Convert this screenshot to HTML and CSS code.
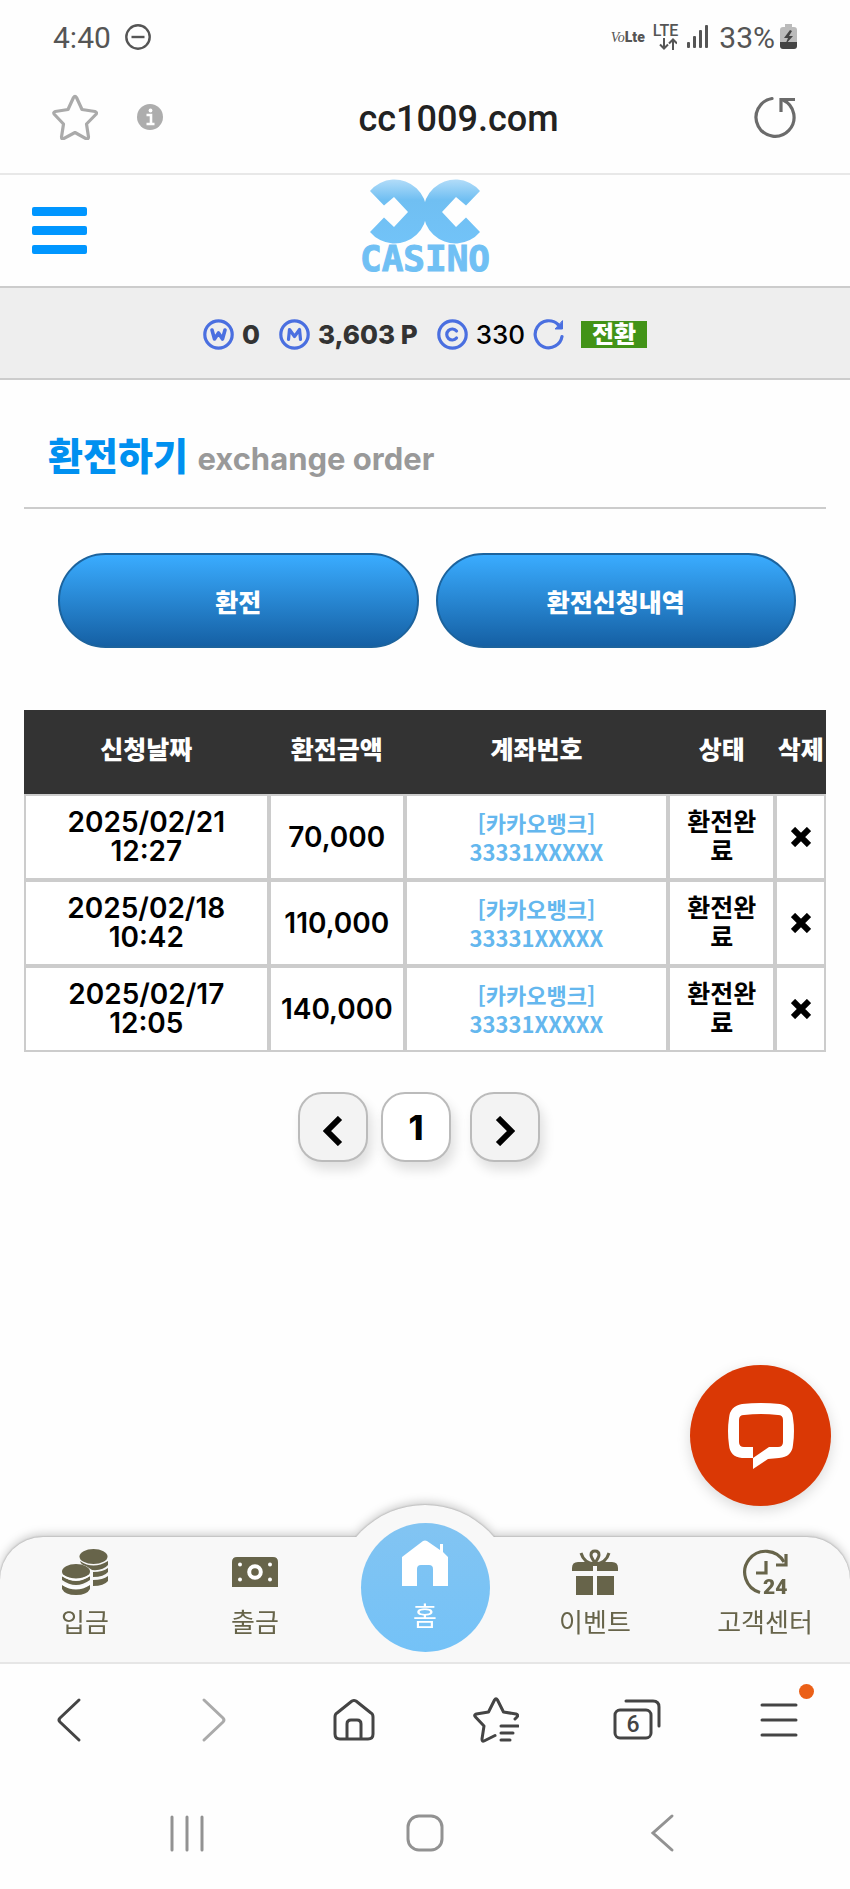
FILE: index.html
```html
<!DOCTYPE html>
<html lang="ko">

<head>
    <meta charset="utf-8">
    <meta name="viewport" content="width=device-width, initial-scale=1.0">
    <title>환전하기</title>
    <link rel="stylesheet" href="styles.css">
</head>

<body>
    <div class="status">
        <span>4:40</span>
        <svg class="dnd" width="26" height="26" viewBox="0 0 26 26" fill="none" stroke="#555" stroke-width="2.4"><circle cx="13" cy="13" r="11.7"/><path d="M6.5 13h13"/></svg>
        <span class="volte"><i>Vo</i><b>Lte</b></span>
        <span class="lte">LTE
            <svg width="18" height="12" viewBox="0 0 18 12" fill="none" stroke="#555" stroke-width="2"><path d="M5 0v10M1 6.500l4 4 4-4M14 12V2M10 5.500l4-4 4 4"/></svg>
        </span>
        <svg class="signal" width="22" height="24" viewBox="0 0 22 24" fill="#555"><rect x="0" y="17" width="3" height="6" rx="1"/><rect x="6" y="11" width="3" height="12" rx="1"/><rect x="12" y="5" width="3" height="18" rx="1"/><rect x="18" y="0" width="3" height="23" rx="1"/></svg>
        <span>33%</span>
        <svg width="17" height="26" viewBox="0 0 17 26"><path d="M5 0h7v3h2q3 0 3 3v12H0V6q0-3 3-3h2z" fill="#bbb"/><path d="M0 18h17v4q0 3-3 3H3q-3 0-3-3z" fill="#444"/><path d="M10 6l-6 8h4l-3 7 8-9H9l3-5z" fill="#444"/></svg>
    </div>

    <div class="address">
        <button aria-label="북마크">
            <svg width="46" height="46" viewBox="0 0 46 46" fill="none" stroke="#aaa" stroke-width="3.200" stroke-linejoin="round"><path d="M21.500 3.500q1.500-2.500 3 0l5.500 12 13 2q2.500.8.8 3l-9.300 9.500 2 13q0 2.500-2.500 1.700L23 38.500l-11.500 6.200q-2 .8-2-1.700l2-13-9-9.500q-1.800-2.200.8-3l12.700-2z"/></svg>
        </button>
        <button aria-label="사이트 정보">
            <svg width="26" height="26" viewBox="0 0 26 26"><circle cx="13" cy="13" r="13" fill="#adadad"/><path d="M9.500 11h4.500v8.500M9.500 20h8" fill="none" stroke="#fff" stroke-width="2.600"/><circle cx="13.500" cy="6.500" r="1.900" fill="#fff"/></svg>
        </button>
        <span class="domain">cc1009.com</span>
        <button aria-label="새로고침">
            <svg width="42" height="42" viewBox="0 0 42 42" fill="none" stroke="#6b6b6b" stroke-width="3.200"><path d="M18 2.500A19 19 0 1 0 29 4" stroke-linecap="round"/><path d="M27 16V3.500h14"/></svg>
        </button>
    </div>

    <header class="header">
        <button class="menu" aria-label="메뉴"><span></span><span></span><span></span></button>
        <a href="#" class="logo">
            <svg width="112" height="65" viewBox="0 0 112 65">
                <defs>
                    <linearGradient id="sky" gradientUnits="userSpaceOnUse" x1="0" y1="0" x2="0" y2="65"><stop offset="0" stop-color="#b4ddf9"/><stop offset=".32" stop-color="#70bff2"/><stop offset="1" stop-color="#72c3f8"/></linearGradient>
                </defs>
                <path fill="url(#sky)" d="M1 12A32 32 0 1 1 1 53L15 38.500 25 48 39 33 25 18 15 26.500Z"/>
                <path fill="url(#sky)" d="M111 12A32 32 0 1 0 111 53L97 38.500 87 48 73 33 87 18 97 26.500Z"/>
            </svg>
            <span>CASINO</span>
        </a>
    </header>

    <div class="wallet">
        <svg width="31" height="31" viewBox="0 0 31 31" fill="none" stroke="#4a6fe0" stroke-width="3.200" stroke-linecap="round" stroke-linejoin="round"><circle cx="15.500" cy="15.500" r="13.700"/><path d="M9 11l2.500 9 4-6 4 6L22 11" stroke-width="3.600"/></svg>
        <strong>0</strong>
        <svg class="coin" width="31" height="31" viewBox="0 0 31 31" fill="none" stroke="#4a6fe0" stroke-width="3.200" stroke-linecap="round" stroke-linejoin="round"><circle cx="15.500" cy="15.500" r="13.700"/><path d="M9.500 20.500l1-10 5 7 5-7 1 10"/></svg>
        <strong>3,603 P</strong>
        <svg class="coin" width="31" height="31" viewBox="0 0 31 31" fill="none" stroke="#4a6fe0" stroke-width="3.200" stroke-linecap="round"><circle cx="15.500" cy="15.500" r="13.700"/><path d="M19.500 12a5.500 5.500 0 1 0 0 7"/></svg>
        <span>330</span>
        <button aria-label="갱신">
            <svg width="32" height="31" viewBox="0 0 32 31" fill="none" stroke="#4a6fe0" stroke-width="3.200" stroke-linecap="round"><path d="M29 17.500A13.500 13.500 0 1 1 25 5.500"/><path d="M29.500 2v8h-7z" fill="#4a6fe0" stroke-width="1"/></svg>
        </button>
        <button class="convert">전환</button>
    </div>

    <main>
        <h1>환전하기 <small>exchange order</small></h1>

        <div class="knapper">
            <button>환전</button>
            <button>환전신청내역</button>
        </div>

        <table>
            <colgroup>
                <col class="col-date"><col class="col-amount"><col class="col-account"><col class="col-state"><col>
            </colgroup>
            <thead>
                <tr>
                    <th>신청날짜</th>
                    <th>환전금액</th>
                    <th>계좌번호</th>
                    <th>상태</th>
                    <th>삭제</th>
                </tr>
            </thead>
            <tbody id="liste"></tbody>
        </table>

        <template>
            <tr>
                <td class="dato"></td>
                <td class="belob"></td>
                <td class="konto">[카카오뱅크]<br>33331XXXXX</td>
                <td class="state">환전완료</td>
                <td><button aria-label="삭제"><svg width="20" height="20" viewBox="0 0 20 20" stroke="#000" stroke-width="6"><path d="M2 2l16 16M18 2L2 18"/></svg></button></td>
            </tr>
        </template>

        <nav class="pages">
            <button aria-label="이전"><svg width="20" height="30" viewBox="0 0 20 30" fill="none" stroke="#000" stroke-width="6"><path d="M17 2L4 15l13 13"/></svg></button>
            <button class="valgt">1</button>
            <button aria-label="다음"><svg width="20" height="30" viewBox="0 0 20 30" fill="none" stroke="#000" stroke-width="6"><path d="M3 2l13 13L3 28"/></svg></button>
        </nav>
    </main>

    <button class="chat" aria-label="채팅">
        <svg width="68" height="68" viewBox="0 0 68 68"><path fill="#fff" fill-rule="evenodd" d="M15 2Q34 0 53 2 65 4 66 16 68 29 66 43 65 55 52 56L41 57 26 67V56H15Q3 55 2 43 0 29 2 16 3 4 15 2ZM17 13Q12 13 12 18V40Q12 45 17 45H26V56L42 45H51Q56 45 56 40V18Q56 13 51 13 34 11 17 13Z"/></svg>
    </button>

    <nav class="tabs">
        <a href="#">
            <svg width="46" height="46" viewBox="0 0 46 46" fill="#67644a">
                <ellipse cx="31.500" cy="7.500" rx="14" ry="7.500"/>
                <path d="M18 12q13 9 28 0v4q-5 6-16 5l-6-4q-5-1-6-5zM31 23q10 0 15-4v4q-4 5-15 5zM31 31q10 0 15-4v5q-4 5-15 5z"/>
                <ellipse cx="14" cy="22.500" rx="14" ry="7.500"/>
                <path d="M0 27q14 10 28 0v4q-14 10-28 0zM0 36q14 9 28 0v4q-3 6-14 6T0 40z"/>
                <path d="M0 26q14 9 28 0M0 34.500q14 9 28 0" fill="none" stroke="#fff" stroke-width="2"/>
            </svg>
            입금
        </a>
        <a href="#">
            <svg width="46" height="46" viewBox="0 0 46 46"><path d="M0 38V13q0-5 5-5h36q5 0 5 5v25z" fill="#67644a"/><circle cx="23" cy="23" r="5.800" fill="none" stroke="#fff" stroke-width="4"/><g fill="#fff"><circle cx="8" cy="15.500" r="2"/><circle cx="38" cy="15.500" r="2"/><circle cx="8" cy="30.500" r="2"/><circle cx="38" cy="30.500" r="2"/></g></svg>
            출금
        </a>
        <a href="#" class="home">
            <svg width="46" height="46" viewBox="0 0 46 46" fill="#fff"><path d="M0 17L21 1q2-1 4 0l13 9V4h3v8l5 5v29H31V29q0-4-4-4h-8q-4 0-4 4v17H0z"/></svg>
            홈
        </a>
        <a href="#">
            <svg width="46" height="46" viewBox="0 0 46 46" fill="#67644a"><path d="M0 22v-3q0-6 6-6h34q6 0 6 6v3H25v-5h-4v5zM4 27h17v19H4zM25 27h17v19H25z"/><path d="M9 4q3 10 13 11M37 4q-3 10-13 11M23 14q-4-6-4-8 0-4 4-4t4 4q0 2-4 8z" fill="none" stroke="#67644a" stroke-width="3"/></svg>
            이벤트
        </a>
        <a href="#">
            <svg width="46" height="46" viewBox="0 0 46 46" fill="none" stroke="#67644a" stroke-width="3.200"><path d="M18 43.500A21 21 0 1 1 42 13"/><path d="M44 5v11H34M24 12v12H14" /><text x="21" y="45" fill="#67644a" stroke="none" class="h24">24</text></svg>
            고객센터
        </a>
    </nav>

    <nav class="browser">
        <button aria-label="뒤로"><svg width="46" height="46" viewBox="0 0 46 46"><path d="M31 3L12 21q-2 2 0 4l19 18"/></svg></button>
        <button aria-label="앞으로" class="off"><svg width="46" height="46" viewBox="0 0 46 46"><path d="M15 3l19 18q2 2 0 4L15 43"/></svg></button>
        <button aria-label="홈"><svg width="46" height="46" viewBox="0 0 46 46"><path d="M4 20q0-3 2-4L21 4q2-1 4 0l15 12q2 1 2 4v17q0 5-5 5H9q-5 0-5-5zM16 42V27q0-4 4-4h6q4 0 4 4v15"/></svg></button>
        <button aria-label="북마크 목록"><svg width="46" height="46" viewBox="0 0 46 46"><path d="M22 38.500L11 44q-2 1-2-2l2-13-8.500-9q-2-2 .8-3l12.200-2 6-12q1.500-2.500 3 0l6 12 12.500 2q3 1 1 3l-2 2M28 29h17M28 36h12M28 43h9"/></svg></button>
        <button aria-label="탭 6개"><svg width="48" height="46" viewBox="0 0 48 46"><rect x="2" y="13" width="36" height="28" rx="5"/><path d="M13 4h27q6 0 6 6v19"/><text x="20" y="35" text-anchor="middle">6</text></svg></button>
        <button aria-label="더보기" class="more"><svg width="46" height="46" viewBox="0 0 46 46"><path d="M6 8h34M6 23h34M6 38h34"/></svg></button>
    </nav>

    <nav class="system">
        <button aria-label="최근 앱"><svg width="40" height="40" viewBox="0 0 40 40"><path d="M5 4v33M20 4v33M35 4v33"/></svg></button>
        <button aria-label="홈 화면"><svg width="40" height="40" viewBox="0 0 40 40"><rect x="3" y="3" width="34" height="34" rx="11"/></svg></button>
        <button aria-label="뒤로가기"><svg width="40" height="40" viewBox="0 0 40 40"><path d="M29 3L10 20l19 17"/></svg></button>
    </nav>

    <script>
        const orders = [
            { dato: "2025/02/21 12:27", belob: "70,000" },
            { dato: "2025/02/18 10:42", belob: "110,000" },
            { dato: "2025/02/17 12:05", belob: "140,000" }
        ];
        const dest = document.querySelector("#liste");
        const skabelon = document.querySelector("template").content;

        orders.forEach(order => {
            const klon = skabelon.cloneNode(true);
            klon.querySelector(".dato").textContent = order.dato;
            klon.querySelector(".belob").textContent = order.belob;
            dest.appendChild(klon);
        });
    </script>
</body>

</html>
```
FILE: styles.css
```css
* {
    box-sizing: border-box;
}

body {
    margin: 0;
    min-height: 100vh;
    display: flex;
    flex-direction: column;
    background-color: #fefefe;
    font-family: Inter, "Noto Sans CJK KR", sans-serif;
    color: #000;
}

button {
    padding: 0;
    border: 0;
    background: none;
    color: inherit;
    font: inherit;
    cursor: pointer;
}

svg {
    display: block;
    flex: none;
}

a {
    color: inherit;
    text-decoration: none;
}

/* status + address */
.status {
    display: flex;
    align-items: center;
    height: 74px;
    padding: 0 53px;
    font-family: Roboto, sans-serif;
    font-size: 30px;
    color: #555;
}

.dnd {
    margin-left: 14px;
    margin-right: auto;
}

.volte {
    display: flex;
    align-items: baseline;
    font-size: 14px;
}

.volte i {
    font-family: "Liberation Serif", serif;
}

.volte b {
    font-weight: 900;
}

.lte {
    display: flex;
    flex-direction: column;
    align-items: center;
    margin: 0 9px 0 8px;
    font-size: 16px;
    font-weight: 500;
    line-height: 14px;
}

.signal {
    margin-right: 10px;
}

.status svg:last-child {
    margin-left: 5px;
}

.address {
    display: grid;
    grid-template-columns: 46px 26px 1fr 42px;
    align-items: center;
    column-gap: 39px;
    height: 101px;
    padding: 0 54px 14px 52px;
    border-bottom: 2px solid #e8e8e8;
}

.domain {
    padding-top: 4px;
    text-align: center;
    font-family: Roboto, sans-serif;
    font-size: 36px;
    font-weight: 500;
    color: #222;
}

/* header */
.header {
    display: grid;
    grid-template-columns: 1fr auto 1fr;
    align-items: center;
    height: 113px;
    padding: 0 32px;
    border-bottom: 2px solid #ccc;
}

.menu {
    display: grid;
    gap: 10px;
    width: 55px;
}

.menu span {
    height: 9px;
    border-radius: 2px;
    background-color: #0096ff;
}

.logo {
    display: flex;
    flex-direction: column;
    align-items: center;
    padding-bottom: 8px;
}

.logo span {
    font-family: "DejaVu Sans Mono", monospace;
    font-size: 36px;
    font-weight: bold;
    line-height: 30px;
    color: #70c0f4;
    -webkit-text-stroke: 1px #70c0f4;
}

.wallet {
    display: flex;
    align-items: center;
    justify-content: center;
    gap: 8px;
    height: 92px;
    padding-top: 3px;
    border-bottom: 2px solid #ccc;
    background-color: #eee;
    font-size: 26px;
    font-weight: 500;
}

.wallet strong {
    font-weight: 800;
    color: #333;
}

.coin {
    margin-left: 11px;
}

.convert {
    width: 66px;
    height: 27px;
    margin-left: 8px;
    background-color: #429317;
    color: white;
    font-size: 24px;
    font-weight: 900;
    line-height: 24px;
}

/* main */
main {
    flex: 1;
    padding: 48px 24px 0;
}

h1 {
    margin: 0 0 44px;
    padding: 0 24px 23px;
    border-bottom: 2px solid #ccc;
    font-size: 38px;
    font-weight: 900;
    line-height: 56px;
    color: #0090f0;
}

h1 small {
    margin-left: 2px;
    font-size: 31px;
    font-weight: 700;
    line-height: 40px;
    color: #999;
}

.knapper {
    display: grid;
    grid-template-columns: 1fr 1fr;
    gap: 17px;
    margin-bottom: 62px;
    padding: 0 30px 0 34px;
}

.knapper button {
    height: 95px;
    border: 2px solid #1c639d;
    border-radius: 48px;
    background: linear-gradient(#3aacff, #1560a4);
    color: white;
    font-size: 25px;
    font-weight: 900;
}

table {
    width: 100%;
    table-layout: fixed;
    border-spacing: 0;
    font-size: 28px;
    font-weight: 600;
    line-height: 29px;
    text-align: center;
}

.col-date {
    width: 30.5%;
}

.col-amount {
    width: 17%;
}

.col-account {
    width: 32.8%;
}

.col-state {
    width: 13.4%;
}

th {
    height: 84px;
    padding: 0 0 4px;
    background-color: #333;
    color: white;
    font-size: 25px;
    font-weight: 900;
    white-space: nowrap;
}

td {
    height: 86px;
    padding: 0;
    border: 2px solid #ccc;
    background-color: white;
}

.dato {
    padding: 0 30px;
}

.konto {
    font-family: "Noto Sans CJK KR", sans-serif;
    font-size: 22px;
    color: #64b7ee;
}

.state {
    padding: 0 12px;
    font-size: 25px;
    font-weight: 700;
    word-break: break-all;
}

td svg {
    margin: auto;
}

.pages {
    display: flex;
    justify-content: center;
    gap: 13px;
    margin-top: 40px;
    padding-right: 12px;
}

.pages button {
    display: flex;
    align-items: center;
    justify-content: center;
    width: 70px;
    height: 70px;
    border: 2px solid #bbb;
    border-radius: 24px;
    background-color: #f3f3f3;
    box-shadow: 4px 8px 12px rgba(0, 0, 0, 0.12);
    font-size: 34px;
    font-weight: 800;
}

.pages svg {
    margin-top: 8px;
}

.pages .valgt {
    margin-right: 6px;
    background-color: white;
}

.chat {
    position: fixed;
    right: 19px;
    bottom: 383px;
    display: grid;
    place-items: center;
    width: 141px;
    height: 141px;
    border-radius: 50%;
    background-color: #da3805;
    box-shadow: 0 4px 14px rgba(0, 0, 0, 0.15);
}

/* bottom tabs */
.tabs {
    position: relative;
    display: grid;
    grid-template-columns: repeat(5, 1fr);
    height: 127px;
    border-bottom: 2px solid #e6e6e6;
    border-radius: 43px 43px 0 0;
    background-color: #f8f8f8;
    filter: drop-shadow(0 0 1px #999) drop-shadow(0 -3px 4px rgba(0, 0, 0, 0.18));
    font-size: 26px;
    line-height: 30px;
    color: #67644a;
}

/* round bump behind the home button */
.tabs::before {
    content: "";
    position: absolute;
    top: -32px;
    left: calc(50% - 90px);
    width: 180px;
    height: 90px;
    border-radius: 90px 90px 0 0;
    background-color: #f8f8f8;
}

.tabs a {
    position: relative;
    display: flex;
    flex-direction: column;
    align-items: center;
    gap: 13px;
    padding-top: 12px;
}

.tabs .home {
    justify-self: center;
    width: 129px;
    height: 129px;
    margin-top: -14px;
    padding-top: 17px;
    gap: 16px;
    border-radius: 50%;
    background: linear-gradient(#82c4f2, #74c2f7);
    color: white;
}

.h24 {
    font-family: Roboto, sans-serif;
    font-size: 21px;
    font-weight: 900;
}

.browser,
.system {
    position: relative;
    display: grid;
    background-color: #fefefe;
}

.browser {
    grid-template-columns: repeat(6, 1fr);
    height: 112px;
}

.system {
    grid-template-columns: repeat(3, 1fr);
    height: 113px;
    padding: 0 68px;
}

.browser button,
.system button {
    display: grid;
    place-items: center;
}

.browser svg {
    fill: none;
    stroke: #444;
    stroke-width: 3;
    stroke-linecap: round;
    stroke-linejoin: round;
}

.browser .off svg {
    stroke: #aaa;
}

.browser text {
    fill: #444;
    stroke: none;
    font-family: Roboto, sans-serif;
    font-size: 23px;
    font-weight: 500;
}

.system svg {
    fill: none;
    stroke: #929292;
    stroke-width: 3;
    stroke-linecap: round;
}

.more {
    position: relative;
}

.more::after {
    content: "";
    position: absolute;
    top: 20px;
    left: calc(50% + 20px);
    width: 15px;
    height: 15px;
    border-radius: 50%;
    background-color: #eb6018;
}
```
